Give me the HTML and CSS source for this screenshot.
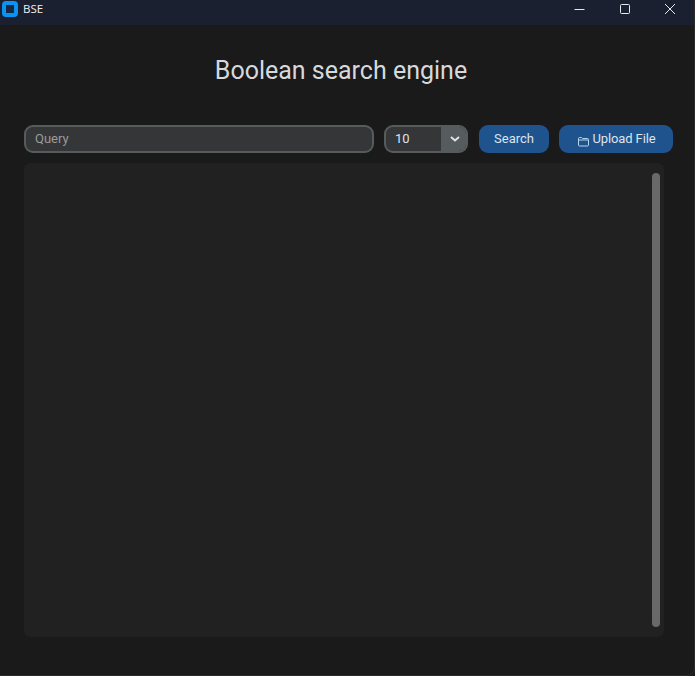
FILE: index.html
```html
<!DOCTYPE html>
<html lang="en">
<head>
<meta charset="utf-8">
<title>BSE</title>
<link rel="stylesheet" href="styles.css">
</head>
<body>
<div class="window">
  <header class="titlebar">
    <div class="app">
      <span class="app-icon"></span>
      <span class="app-name">BSE</span>
    </div>
    <div class="controls">
      <span class="control">
        <svg width="12" height="12" viewBox="0 0 12 12"><path d="M0.5 6.5H10.5" stroke="#e6e8ec" stroke-width="1" fill="none"/></svg>
      </span>
      <span class="control">
        <svg width="12" height="12" viewBox="0 0 12 12"><rect x="1.5" y="1.5" width="9" height="9" rx="1" stroke="#e6e8ec" stroke-width="1" fill="none"/></svg>
      </span>
      <span class="control">
        <svg width="12" height="12" viewBox="0 0 12 12"><path d="M1 1L11 11M11 1L1 11" stroke="#e6e8ec" stroke-width="1" fill="none"/></svg>
      </span>
    </div>
  </header>
  <main class="content">
    <h1 class="heading">Boolean search engine</h1>
    <div class="toolbar">
      <div class="query"><span class="placeholder">Query</span></div>
      <div class="select">
        <span class="select-value">10</span>
        <span class="select-arrow">
          <svg width="10" height="6" viewBox="0 0 10 6"><path d="M1 1L5 4.5L9 1" stroke="#dce4e4" stroke-width="2" fill="none"/></svg>
        </span>
      </div>
      <button class="btn btn-search"><span class="label">Search</span></button>
      <button class="btn btn-upload">
        <svg class="folder" width="11" height="11" viewBox="0 0 11 11"><path d="M0.5 9V2.5C0.5 1.9 0.9 1.5 1.5 1.5H3.5L4.5 2.5H9.5C10.1 2.5 10.5 2.9 10.5 3.5V9C10.5 9.6 10.1 10 9.5 10H1.5C0.9 10 0.5 9.6 0.5 9ZM0.5 4H10.5" stroke="#b9d4ea" stroke-width="1" fill="none"/></svg>
        <span class="label">Upload File</span>
      </button>
    </div>
    <section class="results">
      <div class="scrollbar"></div>
    </section>
  </main>
</div>
</body>
</html>
```
FILE: styles.css
```css
* { box-sizing: border-box; }
html, body { margin: 0; padding: 0; background: #1a1a1a; }
body { width: 695px; height: 676px; overflow: hidden; font-family: Roboto, sans-serif; }
.window { width: 695px; height: 676px; display: flex; flex-direction: column; background: #1a1a1a; border-right: 1px solid #2b2b2b; border-bottom: 1px solid #2b2b2b; border-bottom-right-radius: 8px; }
.titlebar { height: 25px; flex: none; background: #1a2030; display: flex; justify-content: space-between; align-items: flex-start; color: #f0f0f0; }
.app { display: flex; align-items: center; gap: 5px; padding: 1px 0 0 2px; }
.app-icon { width: 16px; height: 16px; border-radius: 4px; border: 4px solid #0a93f5; background: #16283e; }
.app-name { font-family: "Open Sans", sans-serif; font-size: 11.5px; line-height: 16px; }
.controls { display: flex; align-items: center; gap: 33px; padding: 3px 18px 0 0; }
.control { width: 12px; height: 12px; display: flex; }
.content { flex: 1; display: flex; flex-direction: column; padding: 28px 30px 38px 24px; }
.heading { margin: 0 0 37px 0; text-align: center; font-weight: 400; font-size: 25px; line-height: 35px; color: #d6d9dc; padding-right: 6px; height: 35px; }
.toolbar { display: flex; height: 28px; flex: none; margin-right: -9px; }
.query { width: 350px; height: 28px; border: 2px solid #565b5e; border-radius: 9px; background: #343638; display: flex; align-items: center; padding: 0 0 2px 9px; }
.placeholder { font-size: 13px; color: #9b9b9b; }
.select { width: 84px; height: 28px; margin-left: 10px; border: 2px solid #565b5e; border-radius: 9px; background: #343638; display: flex; align-items: stretch; overflow: hidden; }
.select-value { flex: 1; font-size: 13px; color: #dce4ee; padding-left: 9px; line-height: 24px; }
.select-arrow { width: 25px; background: #565b5e; display: flex; align-items: center; justify-content: center; padding-left: 3px; }
.btn { height: 28px; border: 0; border-radius: 9px; background: #1f538d; color: #dce4ee; font-family: Roboto, sans-serif; font-size: 13px; padding: 0; display: flex; align-items: center; justify-content: center; }
.label { margin-top: -2px; }
.btn-search { width: 70px; margin-left: 11px; }
.btn-upload { width: 114px; margin-left: 10px; gap: 3px; padding-left: 2px; letter-spacing: -0.1px; }
.folder { margin-top: 5px; }
.results { margin-top: 10px; flex: 1; width: 640px; background: #212121; border-radius: 6px; padding: 10px 4px 10px 0; display: flex; justify-content: flex-end; }
.scrollbar { width: 8px; background: #696969; border-radius: 4px; }
```
